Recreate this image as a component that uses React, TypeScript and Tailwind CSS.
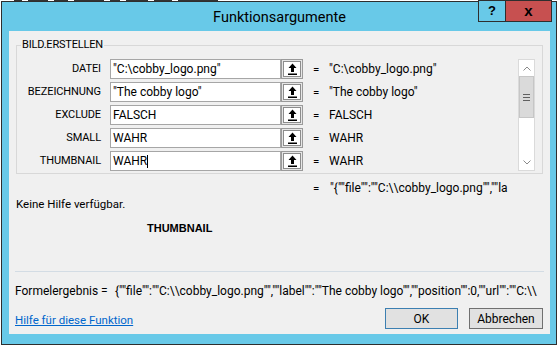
import React from "react";

const rows: [string, string, string][] = [
  ["DATEI", '"C:\\cobby_logo.png"', '"C:\\cobby_logo.png"'],
  ["BEZEICHNUNG", '"The cobby logo"', '"The cobby logo"'],
  ["EXCLUDE", "FALSCH", "FALSCH"],
  ["SMALL", "WAHR", "WAHR"],
  ["THUMBNAIL", "WAHR", "WAHR"],
];

function RefBtn() {
  return (
    <div className="w-[22px] h-[20px] border border-[#9a9a9a] bg-[#e6e6e6] p-[1px]">
      <div className="w-full h-full border border-[#8c8c8c] bg-white flex items-center justify-center">
        <svg width="9" height="12" viewBox="0 0 9 12">
          <path d="M4.5 0.5 L8.5 5 L6 5 L6 9 L3 9 L3 5 L0.5 5 Z" fill="#000" />
          <rect x="0" y="10.5" width="9" height="1.5" fill="#000" />
        </svg>
      </div>
    </div>
  );
}

function ScrollBar() {
  return (
    <div className="w-[17px] border border-[#dadada] bg-white flex flex-col">
      <div className="h-[16px] flex items-center justify-center">
        <svg width="8" height="5" viewBox="0 0 8 5">
          <path d="M0.5 4.5 L4 1 L7.5 4.5" stroke="#8a8a8a" strokeWidth="1" fill="none" />
        </svg>
      </div>
      <div className="h-[42px] bg-[#dadada] border border-[#c6c6c6] flex flex-col items-center justify-center gap-[2px]">
        <div className="w-[7px] h-[1px] bg-[#606060]" />
        <div className="w-[7px] h-[1px] bg-[#606060]" />
        <div className="w-[7px] h-[1px] bg-[#606060]" />
      </div>
      <div className="flex-1" />
      <div className="h-[16px] flex items-center justify-center">
        <svg width="8" height="5" viewBox="0 0 8 5">
          <path d="M0.5 0.5 L4 4 L7.5 0.5" stroke="#8a8a8a" strokeWidth="1" fill="none" />
        </svg>
      </div>
    </div>
  );
}

export default function App() {
  return (
    <div className="relative w-[559px] h-[347px] bg-white overflow-hidden font-[Roboto,Arial,sans-serif] text-black">
      {/* fragments of the sheet behind */}
      <div className="absolute left-0 top-0 w-full h-[1px] flex gap-[6px] pl-[14px]">
        <div className="w-[8px] h-[1px] bg-[#333]" />
        <div className="w-[20px] h-[1px] bg-[#333]" />
        <div className="w-[14px] h-[1px] bg-[#333]" />
        <div className="w-[30px] h-[1px] bg-[#333]" />
        <div className="w-[10px] h-[1px] bg-[#333]" />
        <div className="w-[22px] h-[1px] bg-[#333]" />
        <div className="w-[18px] h-[1px] bg-[#333]" />
        <div className="w-[40px] h-[1px] bg-[#333]" />
      </div>

      {/* window */}
      <div className="absolute left-[1px] top-[1px] w-[556px] h-[344px] border border-[#2e2e2e] bg-[#68c9e8] pl-[7px] pr-[6px] pb-[10px] flex flex-col">
        <div className="h-[29px] flex items-center justify-center pt-[2px] text-[14.5px] text-black">
          Funktionsargumente
        </div>

        {/* client */}
        <div className="flex-1 bg-[#f0f0f0] flex flex-col text-[11.5px] leading-[14px]">
          {/* group box */}
          <div className="relative mt-[14px] ml-[7px] mr-[7px] border border-[#d8d8d8] pt-[13px] pb-[2px] flex">
            <div className="absolute left-[4px] top-[-8px] px-[1px] bg-[#f0f0f0] leading-[14px] text-[11px] tracking-[-0.2px]">
              BILD.ERSTELLEN
            </div>
            <div className="flex-1 flex flex-col gap-[3px]">
              {rows.map(([label, input, value], i) => (
                <div key={label} className="flex items-center h-[20px]">
                  <div className="w-[84px] text-right text-[11px] tracking-[-0.1px]">{label}</div>
                  <div className="ml-[9px] w-[171px] h-[20px] border border-[#a6a6a6] bg-white pl-[2px] flex items-center text-[12px]">
                    <span>{input}</span>
                    {i === 4 && <span className="w-[1px] h-[13px] bg-black" />}
                  </div>
                  <RefBtn />
                  <div className="w-[26px] pl-[10px]">=</div>
                  <div className="text-[12px]">{value}</div>
                </div>
              ))}
            </div>
            <div className="mr-[7px] flex">
              <ScrollBar />
            </div>
          </div>

          <div className="mt-[7px] h-[14px] pl-[304px] flex">
            <div className="w-[17px]">=</div>
            <div className="whitespace-nowrap text-[12px]">"&#123;""file"":""C:\\cobby_logo.png"",""la</div>
          </div>

          <div className="mt-[2px] h-[14px] pl-[7px]">Keine Hilfe verfügbar.</div>

          <div className="mt-[10px] h-[14px] pl-[138px] font-['Liberation_Sans'] font-bold text-[11px]">
            THUMBNAIL
          </div>

          <div className="mt-[36px] ml-[6px] mr-[6px] h-[1px] bg-[#d3dce4]" />

          <div className="mt-[12px] h-[14px] ml-[6px] mr-[5px] flex overflow-hidden whitespace-nowrap text-[12px]">
            <div className="w-[100px] shrink-0">Formelergebnis =</div>
            <div>&#123;""file"":""C:\\cobby_logo.png"",""label"":""The cobby logo"",""position"":0,""url"":""C:\\</div>
          </div>

          <div className="mt-[10px] h-[21px] ml-[6px] mr-[7px] flex items-center text-[12px]">
            <div className="flex-1 pt-[3px] text-[#0066cc] underline text-[11.5px]">Hilfe für diese Funktion</div>
            <div className="w-[73px] h-[21px] border border-[#3c7fb1] bg-[#e1e1e1] flex items-center justify-center">
              OK
            </div>
            <div className="ml-[11px] w-[74px] h-[21px] border border-[#707070] bg-[#e1e1e1] flex items-center justify-center">
              Abbrechen
            </div>
          </div>
        </div>
      </div>

      {/* caption buttons */}
      <div className="absolute left-[478px] top-0 w-[28px] h-[22px] border border-[#2e2e2e] bg-[#68c9e8] flex items-center justify-center font-['Liberation_Sans'] font-bold text-[13px]">
        ?
      </div>
      <div className="absolute left-[505px] top-0 w-[47px] h-[22px] border border-[#2e2e2e] bg-[#c75050] flex items-center justify-center font-['Liberation_Sans'] font-bold text-[15px] leading-none pb-[2px]">
        x
      </div>
    </div>
  );
}
